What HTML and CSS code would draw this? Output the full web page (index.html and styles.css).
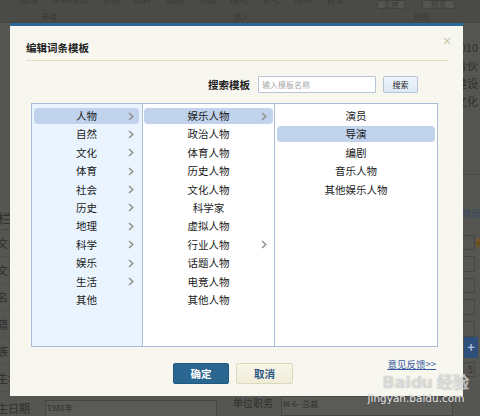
FILE: index.html
```html
<!DOCTYPE html>
<html lang="zh-CN">
<head>
<meta charset="utf-8">
<title>编辑词条模板</title>
<link rel="stylesheet" href="styles.css">
</head>
<body>
<div class="page">
  <div class="toolbar">
    <div class="tb-row1">
      <span class="tb-item">段落</span>
      <span class="tb-item">字体样式</span>
      <span class="tb-item">表格</span>
      <span class="tb-item">图片</span>
      <span class="tb-item">视频</span>
      <span class="tb-item">地图</span>
      <span class="tb-item">模块</span>
      <span class="tb-item">参考</span>
      <span class="tb-item">附件</span>
      <span class="tb-item">目录</span>
      <span class="tb-btn">全屏</span>
      <span class="tb-btn wide">预览</span>
    </div>
    <div class="tb-row2">
      <span class="grp g1">参考</span>
      <span class="grp g2">插入</span>
      <span class="grp g3">视图</span>
    </div>
  </div>
  <div class="doc">
    <div class="doc-left">
      <div class="lrow big">基本信息栏</div>
      <div class="lrow">中文名</div>
      <div class="lrow">外文名</div>
      <div class="lrow">别名</div>
      <div class="lrow">国籍</div>
      <div class="lrow">民族</div>
      <div class="lrow">出生地</div>
      <div class="lrow last"><span>出生日期</span><span class="fake-input">1981年</span></div>
    </div>
    <div class="doc-right">
      <div class="para">2010<br>合伙<br>建设<br>文化</div>
      <div class="rline"></div>
      <div class="rlink">模版</div>
      <div class="rbox first"><i class="tag">国</i></div>
      <div class="rbox"></div>
      <div class="rbox"></div>
      <div class="rbox"></div>
      <div class="rbox"></div>
      <div class="rplus">+</div>
      <div class="rbox small">5</div>
      <div class="rlast"><span>单位职务</span><span class="fake-input w2">M-6--总裁</span></div>
    </div>
  </div>
</div>

<div class="dialog">
  <div class="dlg-head">
    <h2 class="dlg-title">编辑词条模板</h2>
    <span class="dlg-close">×</span>
  </div>
  <div class="search">
    <label class="search-label" for="q">搜索模板</label>
    <input id="q" class="search-input" type="text" placeholder="输入模板名称">
    <button class="search-btn" type="button">搜索</button>
  </div>
  <div class="cols">
    <ul class="col c1">
      <li class="on"><span></span><span>人物</span><i class="chev"><svg width="6" height="9" viewBox="0 0 6 9"><polyline points="1,1 4.8,4.5 1,8" /></svg></i></li>
      <li><span></span><span>自然</span><i class="chev"><svg width="6" height="9" viewBox="0 0 6 9"><polyline points="1,1 4.8,4.5 1,8" /></svg></i></li>
      <li><span></span><span>文化</span><i class="chev"><svg width="6" height="9" viewBox="0 0 6 9"><polyline points="1,1 4.8,4.5 1,8" /></svg></i></li>
      <li><span></span><span>体育</span><i class="chev"><svg width="6" height="9" viewBox="0 0 6 9"><polyline points="1,1 4.8,4.5 1,8" /></svg></i></li>
      <li><span></span><span>社会</span><i class="chev"><svg width="6" height="9" viewBox="0 0 6 9"><polyline points="1,1 4.8,4.5 1,8" /></svg></i></li>
      <li><span></span><span>历史</span><i class="chev"><svg width="6" height="9" viewBox="0 0 6 9"><polyline points="1,1 4.8,4.5 1,8" /></svg></i></li>
      <li><span></span><span>地理</span><i class="chev"><svg width="6" height="9" viewBox="0 0 6 9"><polyline points="1,1 4.8,4.5 1,8" /></svg></i></li>
      <li><span></span><span>科学</span><i class="chev"><svg width="6" height="9" viewBox="0 0 6 9"><polyline points="1,1 4.8,4.5 1,8" /></svg></i></li>
      <li><span></span><span>娱乐</span><i class="chev"><svg width="6" height="9" viewBox="0 0 6 9"><polyline points="1,1 4.8,4.5 1,8" /></svg></i></li>
      <li><span></span><span>生活</span><i class="chev"><svg width="6" height="9" viewBox="0 0 6 9"><polyline points="1,1 4.8,4.5 1,8" /></svg></i></li>
      <li><span></span><span>其他</span><i class="chev none"></i></li>
    </ul>
    <ul class="col c2">
      <li class="on"><span></span><span>娱乐人物</span><i class="chev"><svg width="6" height="9" viewBox="0 0 6 9"><polyline points="1,1 4.8,4.5 1,8" /></svg></i></li>
      <li><span></span><span>政治人物</span><i class="chev none"></i></li>
      <li><span></span><span>体育人物</span><i class="chev none"></i></li>
      <li><span></span><span>历史人物</span><i class="chev none"></i></li>
      <li><span></span><span>文化人物</span><i class="chev none"></i></li>
      <li><span></span><span>科学家</span><i class="chev none"></i></li>
      <li><span></span><span>虚拟人物</span><i class="chev none"></i></li>
      <li><span></span><span>行业人物</span><i class="chev"><svg width="6" height="9" viewBox="0 0 6 9"><polyline points="1,1 4.8,4.5 1,8" /></svg></i></li>
      <li><span></span><span>话题人物</span><i class="chev none"></i></li>
      <li><span></span><span>电竞人物</span><i class="chev none"></i></li>
      <li><span></span><span>其他人物</span><i class="chev none"></i></li>
    </ul>
    <ul class="col c3">
      <li><span></span><span>演员</span><i class="chev none"></i></li>
      <li class="on"><span></span><span>导演</span><i class="chev none"></i></li>
      <li><span></span><span>编剧</span><i class="chev none"></i></li>
      <li><span></span><span>音乐人物</span><i class="chev none"></i></li>
      <li><span></span><span>其他娱乐人物</span><i class="chev none"></i></li>
    </ul>
  </div>
  <div class="foot">
    <span></span>
    <div class="btns">
      <button class="btn ok" type="button">确定</button>
      <button class="btn cancel" type="button">取消</button>
    </div>
    <a class="feedback" href="#">意见反馈&gt;&gt;</a>
  </div>
</div>

<div class="watermark">
  <div class="wm-logo">Bai<span class="paw">du</span> 经验</div>
  <div class="wm-url">jingyan.baidu.com</div>
</div>
</body>
</html>
```

FILE: styles.css
```css
* { box-sizing: border-box; }
html, body { margin: 0; padding: 0; }
body {
  width: 480px;
  height: 416px;
  overflow: hidden;
  background: #555551;
  font-family: "Noto Sans CJK SC", "DejaVu Sans", sans-serif;
  position: relative;
}

/* ---------- dimmed page behind ---------- */
.page { width: 480px; height: 416px; color: #2f2f2c; }
.toolbar { height: 23px; background: #4a4a46; border-bottom: 1px solid #444440; }
.tb-row1 {
  height: 10px;
  overflow: hidden;
  display: flex;
  gap: 14px;
  padding-left: 20px;
  font-size: 9px;
  color: #3b3b38;
}
.tb-item { margin-top: -7px; line-height: 14px; }
.tb-btn {
  margin-left: auto;
  width: 28px;
  height: 9px;
  background: #555551;
  border: 1px solid #42423e;
  border-radius: 2px;
  font-size: 8px;
  line-height: 6px;
  text-align: center;
  color: #3c3c39;
}
.tb-btn.wide { margin-left: 3px; width: 33px; margin-right: 25px; }
.tb-row2 {
  display: flex;
  height: 13px;
  font-size: 8px;
  line-height: 13px;
  color: #3a3a37;
}
.grp { text-align: center; }
.g1 { width: 100px; border-right: 1px solid #464642; }
.g2 { width: 284px; border-right: 1px solid #464642; }
.g3 { width: 75px; }

.doc { display: flex; height: 393px; }
.doc-left {
  width: 240px;
  margin-left: -14px;
  padding-top: 181px;
  display: flex;
  flex-direction: column;
  font-size: 11px;
}
.lrow {
  height: 27px;
  line-height: 27px;
  border-bottom: 1px dashed #4a4a46;
  white-space: nowrap;
}
.lrow.big { font-size: 13px; height: 26px; margin-left: -40px; border-bottom: 1px solid #464642; }
.lrow.last { display: flex; gap: 15px; border: none; margin-top: 8px; height: 20px; line-height: 16px; }
.fake-input {
  display: inline-block;
  width: 172px;
  height: 20px;
  border: 1px solid #464642;
  background: #5a5a56;
  font-size: 8px;
  line-height: 14px;
  padding-left: 1px;
}
.doc-right { flex: 1; padding-top: 15px; display: flex; flex-direction: column; align-items: flex-end; font-size: 11px; }
.para { width: 60px; text-align: right; padding-right: 2px; line-height: 18px; white-space: nowrap; }
.rline { align-self: stretch; height: 1px; background: #4a4a46; margin-top: 64px; }
.rlink { width: 18px; overflow: hidden; white-space: nowrap; margin-top: 31px; color: #3b4a66; font-size: 9px; line-height: 16px; }
.rbox { position: relative; width: 15px; height: 16px; border: 1px solid #464642; margin-top: 6px; margin-right: 5px; }
.rbox.first { margin-top: 13px; }
.tag {
  position: absolute; left: 15px; top: 3px;
  width: 5px; height: 8px; background: #7a5a2a; font-size: 5px; font-style: normal; color: #4a3a1a;
}
.rbox.small { margin-top: 4px; height: 15px; font-size: 9px; line-height: 13px; text-align: right; padding-right: 1px; }
.rplus {
  width: 14px; height: 22px; margin-top: 0; margin-right: 2px;
  background: #2c4f7c; color: #a9bcd6; font-size: 13px; line-height: 20px; text-align: center; font-weight: 700;
}
.rlast { align-self: stretch; display: flex; gap: 8px; margin-top: 19px; padding-left: 7px; font-size: 10px; line-height: 14px; white-space: nowrap; }
.fake-input.w2 { width: 172px; }

/* ---------- dialog ---------- */
.dialog {
  position: absolute;
  left: 10px;
  top: 23px;
  width: 453px;
  height: 373px;
  background: #f7f7ef;
  border-top: 3px solid #2b6a98;
  display: flex;
  flex-direction: column;
}
.dlg-head {
  margin: 0 15px 0 16px;
  padding: 15px 0 5px;
  border-bottom: 1px solid #e0dfc6;
  display: flex;
  justify-content: space-between;
  align-items: flex-start;
}
.dlg-title {
  margin: 0;
  font-size: 10.5px;
  line-height: 14px;
  font-weight: 700;
  color: #222;
}
.dlg-close {
  font-family: "DejaVu Sans", sans-serif;
  font-size: 12px;
  line-height: 10px;
  color: #c9c8ac;
  margin-top: -5px;
  margin-right: -4px;
}
.search {
  margin-top: 15px;
  padding-right: 45px;
  display: flex;
  justify-content: flex-end;
  align-items: center;
  height: 17px;
}
.search-label { font-size: 10.5px; font-weight: 700; color: #222; margin-right: 8px; }
.search-input {
  width: 118px;
  height: 17px;
  border: 1px solid #b8c6d6;
  border-radius: 1px;
  background: #fff;
  font-family: inherit;
  font-size: 8px;
  padding: 0 3px;
  margin: 0 7px 0 0;
  outline: none;
}
.search-input::placeholder { color: #a8a8a8; }
.search-btn {
  width: 35px;
  height: 17px;
  padding: 0;
  margin: 0;
  border: 1px solid #b7c5d3;
  border-radius: 2px;
  background: linear-gradient(#eef4fb, #dde9f6);
  font-family: inherit;
  font-size: 8px;
  color: #222;
}

.cols {
  margin: 10px 0 0 21px;
  width: 407px;
  height: 244px;
  border: 1px solid #a9bed6;
  display: flex;
}
.col { list-style: none; margin: 0; padding: 4px 0 0; height: 100%; }
.c1 { width: 111px; background: #e9f4fe; border-right: 1px solid #a9bed6; }
.c2 { width: 132px; background: #fff; border-right: 1px solid #a9bed6; }
.c3 { flex: 1; background: #fff; }
.col li {
  display: grid;
  grid-template-columns: 1fr auto 1fr;
  align-items: center;
  height: 16px;
  margin: 0 2px 2.4px;
  border-radius: 4px;
  font-size: 10.5px;
  line-height: 16px;
  color: #1a1a1a;
  white-space: nowrap;
}
.c1 li { margin-right: 3px; }
.c2 li { margin-left: 1px; margin-right: 1px; }
.col li.on { background: #c1d2ec; }
.chev { justify-self: end; display: flex; padding-right: 5px; }
.c2 .chev { padding-right: 6px; }
.chev svg polyline { fill: none; stroke: #8e8e84; stroke-width: 1.4; }

.foot {
  margin: 16px 0 0 21px;
  width: 407px;
  display: grid;
  grid-template-columns: 1fr auto 1fr;
  align-items: start;
}
.btns { display: flex; gap: 7px; margin-left: -3px; }
.btn {
  width: 56px;
  height: 21px;
  padding: 0;
  border-radius: 2px;
  font-family: inherit;
  font-size: 10.5px;
  font-weight: 700;
}
.btn.ok { background: #2a668f; border: 1px solid #1f5a80; color: #fff; }
.btn.cancel { width: 57px; background: linear-gradient(#f8f6e8, #efecd8); border: 1px solid #dcd8bd; color: #2c5884; }
.feedback {
  justify-self: end;
  margin-right: 2px;
  margin-top: -5px;
  font-size: 9.5px;
  line-height: 13px;
  color: #3858a4;
  text-decoration: underline;
}

/* ---------- watermark ---------- */
.watermark {
  position: absolute;
  left: 364px;
  top: 374px;
  width: 110px;
  display: flex;
  flex-direction: column;
  align-items: center;
  pointer-events: none;
}
.wm-logo {
  font-family: "DejaVu Sans", sans-serif;
  font-size: 16px;
  font-weight: 700;
  line-height: 18px;
  color: rgba(255,255,255,0.6);
  text-shadow: 0 0 1px rgba(120,120,120,0.7);
  margin-left: 14px;
}
.paw { letter-spacing: -1px; }
.wm-url {
  font-family: "DejaVu Sans", sans-serif;
  font-size: 10.5px;
  line-height: 13px;
  color: rgba(245,245,245,0.92);
  text-shadow: 0 0 1px rgba(80,80,80,0.7);
  margin-left: -6px;
}
```
